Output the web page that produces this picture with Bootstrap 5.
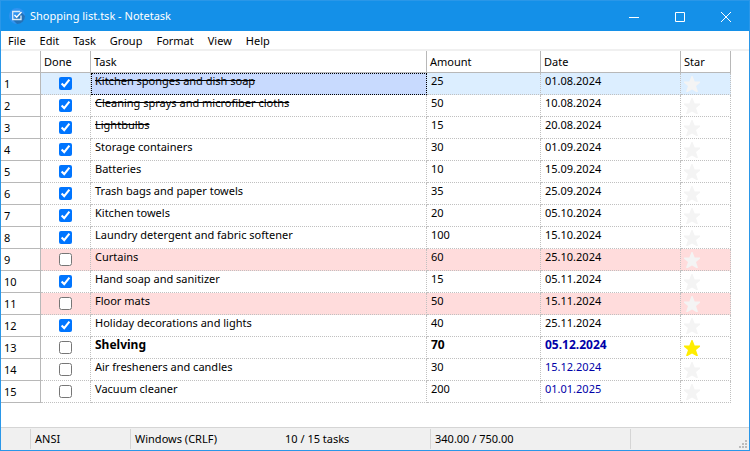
<!DOCTYPE html>
<html lang="en">
<head>
<meta charset="utf-8">
<meta name="viewport" content="width=device-width, initial-scale=1">
<title>Shopping list.tsk - Notetask</title>
<link href="https://cdn.jsdelivr.net/npm/bootstrap@5.3.0/dist/css/bootstrap.min.css" rel="stylesheet">
<style>
body { font: 11px/16px "Noto Sans", "Open Sans", sans-serif; color: #000; background: #fff; }
button { font: inherit; color: inherit; background: none; border: 0; padding: 0; }
.app-window { border: 1px solid #2a97e8; }
.titlebar { height: 30px; background: #1490e8; color: #fff; padding-left: 8px; }
.titlebar h1 { font-size: 11px; line-height: 16px; padding-left: 5px; }
.caption-btn { width: 46px; height: 30px; }
.menubar { height: 20px; padding-left: 2px; border-bottom: 2px solid #f0f0f0; }
.menubar button { padding: 1px 5px 0; margin-right: 4px; }
.grid-area { padding-right: 18px; }
.task-grid { table-layout: fixed; width: 100%; border-collapse: separate; border-spacing: 0; }
.task-grid th { font-weight: 400; padding: 0 3px; border-right: 1px solid #b8b8b8; border-bottom: 1px solid #b8b8b8; }
.task-grid thead th { height: 22px; }
.task-grid td { height: 22px; padding: 0 4px 5px; vertical-align: top; border-right: 1px dotted #c0c0c0; border-bottom: 1px dotted #c0c0c0; }
.task-grid td.cell-mid { padding: 0; vertical-align: middle; line-height: 0; }
.task-grid td.cell-mid input { width: 13px; height: 13px; margin: 0; }
.task-grid td.cell-star { padding: 3px 3px 0; line-height: 0; }
.star-icon { width: 16px; height: 17px; fill: #f4f4f4; display: block; }
.star-on .star-icon { fill: #ffed00; }
.star-on td { font-size: 12px; }
.row-current td { background: #dceeff; }
.row-current td.cell-focus { background: #c8dafe; outline: 1px dotted #000; outline-offset: -1px; border-color: #c8dafe #000 #c0c0c0; text-decoration: line-through; }
.row-late td { background: #ffdcdc; }
.struck { text-decoration: line-through; }
.date-next { color: #0000a8; }
.col-num { width: 40px; } .col-done, .col-star { width: 50px; } .col-amount { width: 114px; } .col-date { width: 140px; }
.statusbar { height: 23px; background: #f0f0f0; border-top: 1px solid #d5d5d5; padding-top: 1px; }
.pane { height: 20px; padding: 2px 4px; border-right: 1px solid #d5d5d5; white-space: nowrap; }
.pane-s { width: 30px; } .pane-m { width: 100px; } .pane-l { width: 150px; } .pane-xl { width: 200px; }
.grip { width: 8px; height: 8px; fill: #bcbcbc; margin: 0 2px 2px auto; }
</style>
<script src="https://cdn.jsdelivr.net/npm/bootstrap@5.3.0/dist/js/bootstrap.bundle.min.js"></script>
</head>
<body>
<svg class="d-none"><symbol id="star" viewBox="0 0 16 17"><path d="M7.5 0H8.5L10.7 5.5H16V6.8L12 10L13.8 15.2V16H12.4L8 13.4L3.6 16H2.2V15.2L4 10L0 6.8V5.5H5.3Z"/></symbol></svg>
<div class="app-window d-flex flex-column vh-100">
<header class="titlebar d-flex align-items-center">
<svg width="16" height="16" viewBox="0 0 16 16" fill="none" aria-hidden="true"><circle cx="8" cy="8" r="8" fill="#3093f0"/><path d="M4 12L8 16A8 8 0 0 0 16 8L12 4Z" fill="#2372b8"/><path d="M11 3.5H3.7V11.5H12V7.5" stroke="#dcebf8" stroke-width="1.3"/><path d="M5.5 7L7.7 9.2L12.5 4" stroke="#fff" stroke-width="1.5"/></svg>
<h1 class="m-0 fw-normal">Shopping list.tsk - Notetask</h1>
<div class="d-flex ms-auto">
<button class="caption-btn" type="button" aria-label="Minimize"><svg width="10" height="10" viewBox="0 0 10 10" stroke="#fff"><path d="M0 5.5H10"/></svg></button>
<button class="caption-btn" type="button" aria-label="Maximize"><svg width="10" height="10" viewBox="0 0 10 10" fill="none" stroke="#fff"><path d="M.5.5H9.5V9.5H.5Z"/></svg></button>
<button class="caption-btn" type="button" aria-label="Close"><svg width="10" height="10" viewBox="0 0 10 10" stroke="#fff"><path d="M0 0L10 10M10 0L0 10"/></svg></button>
</div>
</header>
<nav class="menubar d-flex align-items-center" aria-label="Main menu">
<button type="button">File</button><button type="button">Edit</button><button type="button">Task</button><button type="button">Group</button><button type="button">Format</button><button type="button">View</button><button type="button">Help</button>
</nav>
<main class="grid-area flex-grow-1">
<table class="task-grid">
<colgroup><col class="col-num"><col class="col-done"><col><col class="col-amount"><col class="col-date"><col class="col-star"></colgroup>
<thead><tr><th></th><th scope="col">Done</th><th scope="col">Task</th><th scope="col">Amount</th><th scope="col">Date</th><th scope="col">Star</th></tr></thead>
<tbody>
<tr class="row-current"><th scope="row">1</th><td class="cell-mid text-center"><input type="checkbox" aria-label="Kitchen sponges and dish soap done" checked></td><td class="cell-focus">Kitchen sponges and dish soap</td><td>25</td><td>01.08.2024</td><td class="cell-star"><button type="button" aria-label="Star"><svg class="star-icon"><use href="#star"/></svg></button></td></tr>
<tr><th scope="row">2</th><td class="cell-mid text-center"><input type="checkbox" aria-label="Cleaning sprays and microfiber cloths done" checked></td><td class="struck">Cleaning sprays and microfiber cloths</td><td>50</td><td>10.08.2024</td><td class="cell-star"><button type="button" aria-label="Star"><svg class="star-icon"><use href="#star"/></svg></button></td></tr>
<tr><th scope="row">3</th><td class="cell-mid text-center"><input type="checkbox" aria-label="Lightbulbs done" checked></td><td class="struck">Lightbulbs</td><td>15</td><td>20.08.2024</td><td class="cell-star"><button type="button" aria-label="Star"><svg class="star-icon"><use href="#star"/></svg></button></td></tr>
<tr><th scope="row">4</th><td class="cell-mid text-center"><input type="checkbox" aria-label="Storage containers done" checked></td><td>Storage containers</td><td>30</td><td>01.09.2024</td><td class="cell-star"><button type="button" aria-label="Star"><svg class="star-icon"><use href="#star"/></svg></button></td></tr>
<tr><th scope="row">5</th><td class="cell-mid text-center"><input type="checkbox" aria-label="Batteries done" checked></td><td>Batteries</td><td>10</td><td>15.09.2024</td><td class="cell-star"><button type="button" aria-label="Star"><svg class="star-icon"><use href="#star"/></svg></button></td></tr>
<tr><th scope="row">6</th><td class="cell-mid text-center"><input type="checkbox" aria-label="Trash bags and paper towels done" checked></td><td>Trash bags and paper towels</td><td>35</td><td>25.09.2024</td><td class="cell-star"><button type="button" aria-label="Star"><svg class="star-icon"><use href="#star"/></svg></button></td></tr>
<tr><th scope="row">7</th><td class="cell-mid text-center"><input type="checkbox" aria-label="Kitchen towels done" checked></td><td>Kitchen towels</td><td>20</td><td>05.10.2024</td><td class="cell-star"><button type="button" aria-label="Star"><svg class="star-icon"><use href="#star"/></svg></button></td></tr>
<tr><th scope="row">8</th><td class="cell-mid text-center"><input type="checkbox" aria-label="Laundry detergent and fabric softener done" checked></td><td>Laundry detergent and fabric softener</td><td>100</td><td>15.10.2024</td><td class="cell-star"><button type="button" aria-label="Star"><svg class="star-icon"><use href="#star"/></svg></button></td></tr>
<tr class="row-late"><th scope="row">9</th><td class="cell-mid text-center"><input type="checkbox" aria-label="Curtains done"></td><td>Curtains</td><td>60</td><td>25.10.2024</td><td class="cell-star"><button type="button" aria-label="Star"><svg class="star-icon"><use href="#star"/></svg></button></td></tr>
<tr><th scope="row">10</th><td class="cell-mid text-center"><input type="checkbox" aria-label="Hand soap and sanitizer done" checked></td><td>Hand soap and sanitizer</td><td>15</td><td>05.11.2024</td><td class="cell-star"><button type="button" aria-label="Star"><svg class="star-icon"><use href="#star"/></svg></button></td></tr>
<tr class="row-late"><th scope="row">11</th><td class="cell-mid text-center"><input type="checkbox" aria-label="Floor mats done"></td><td>Floor mats</td><td>50</td><td>15.11.2024</td><td class="cell-star"><button type="button" aria-label="Star"><svg class="star-icon"><use href="#star"/></svg></button></td></tr>
<tr><th scope="row">12</th><td class="cell-mid text-center"><input type="checkbox" aria-label="Holiday decorations and lights done" checked></td><td>Holiday decorations and lights</td><td>40</td><td>25.11.2024</td><td class="cell-star"><button type="button" aria-label="Star"><svg class="star-icon"><use href="#star"/></svg></button></td></tr>
<tr class="star-on"><th scope="row">13</th><td class="cell-mid text-center"><input type="checkbox" aria-label="Shelving done"></td><td class="fw-bold">Shelving</td><td class="fw-bold">70</td><td class="fw-bold date-next">05.12.2024</td><td class="cell-star"><button type="button" aria-label="Unstar"><svg class="star-icon"><use href="#star"/></svg></button></td></tr>
<tr><th scope="row">14</th><td class="cell-mid text-center"><input type="checkbox" aria-label="Air fresheners and candles done"></td><td>Air fresheners and candles</td><td>30</td><td class="date-next">15.12.2024</td><td class="cell-star"><button type="button" aria-label="Star"><svg class="star-icon"><use href="#star"/></svg></button></td></tr>
<tr><th scope="row">15</th><td class="cell-mid text-center"><input type="checkbox" aria-label="Vacuum cleaner done"></td><td>Vacuum cleaner</td><td>200</td><td class="date-next">01.01.2025</td><td class="cell-star"><button type="button" aria-label="Star"><svg class="star-icon"><use href="#star"/></svg></button></td></tr>
</tbody>
</table>
</main>
<footer class="statusbar d-flex">
<div class="pane pane-s"></div><div class="pane pane-m">ANSI</div><div class="pane pane-l border-end-0">Windows (CRLF)</div><div class="pane pane-l">10 / 15 tasks</div><div class="pane pane-xl">340.00 / 750.00</div>
<svg class="grip align-self-end" viewBox="0 0 8 8" aria-hidden="true"><path d="M6 0h2v2H6zM3 3h2v2H3zM6 3h2v2H6zM0 6h2v2H0zM3 6h2v2H3zM6 6h2v2H6z"/></svg>
</footer>
</div>
</body>
</html>
